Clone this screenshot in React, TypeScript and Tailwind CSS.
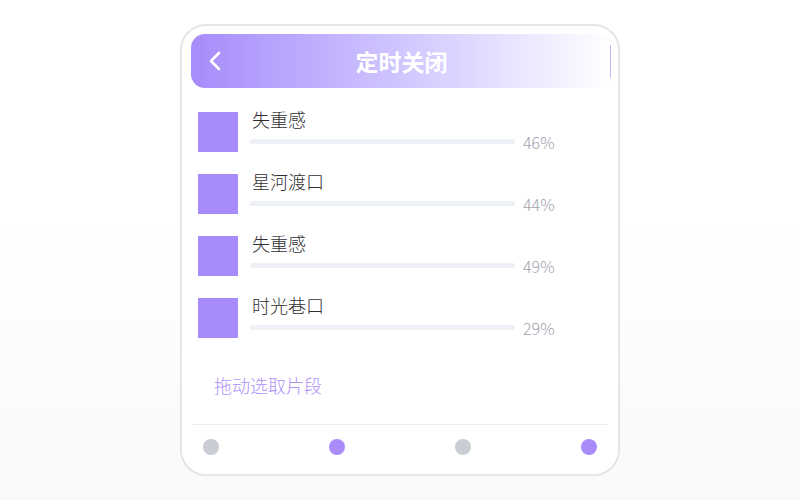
import React from "react";

interface Track {
  name: string;
  percent: number;
}

const TRACKS: Track[] = [
  { name: "失重感", percent: 46 },
  { name: "星河渡口", percent: 44 },
  { name: "失重感", percent: 49 },
  { name: "时光巷口", percent: 29 },
];

// page dots under the list: purple = active
const DOTS = [false, true, false, true];

const FONT = { fontFamily: '"Noto Sans CJK SC", "Noto Sans", sans-serif' };

const BackIcon = () => (
  <svg width="14" height="20" viewBox="0 0 14 20" fill="none">
    <path
      d="M11 2 L3 10 L11 18"
      stroke="white"
      strokeWidth="2.6"
      strokeLinecap="round"
      strokeLinejoin="round"
    />
  </svg>
);

const TrackRow: React.FC<{ track: Track }> = ({ track }) => (
  <div className="flex items-start h-10">
    <div className="w-10 h-10 bg-[#a78bfa] shrink-0" />
    <div className="ml-3 -mt-0.5 flex flex-col">
      <span className="text-[18px] leading-[18px] font-light text-[#2f2f33] pl-0.5">{track.name}</span>
      <div className="mt-[3px] h-5 flex items-center">
        <div className="w-[265px] h-[5px] rounded-full bg-[#edf0f4]" />
        <span className="ml-2 translate-y-px text-[16px] leading-5 font-light text-[#9ba1ab]">
          {track.percent}%
        </span>
      </div>
    </div>
  </div>
);

export default function App() {
  return (
    <div
      className="w-[800px] h-[500px] flex items-center justify-center bg-linear-to-b from-white from-45% to-[#f9f9fa]"
      style={FONT}
    >
      <div className="w-[440px] rounded-[26px] border-2 border-[#e6e6ea] bg-white pt-2 pb-[19px]">
        {/* --- Header --- */}
        <div className="relative ml-[9px] w-[421px] h-[54px] rounded-[14px] bg-linear-to-r from-[#a78bfa] to-white flex items-center justify-center">
          <div className="absolute left-[17px] top-[17px]">
            <BackIcon />
          </div>
          <h1 className="text-[23px] font-bold text-white">定时关闭</h1>
          <div className="absolute right-[1px] top-[11px] h-[33px] w-px bg-[#c4b5fd]" />
        </div>

        {/* --- Track list --- */}
        <div className="mt-6 pl-4 flex flex-col gap-[22px]">
          {TRACKS.map((t, i) => (
            <TrackRow key={i} track={t} />
          ))}
        </div>

        <p className="mt-[35px] pl-8 text-[18px] leading-6 font-light text-[#ad91fb]">拖动选取片段</p>

        <div className="mt-[27px] mx-[10px] h-px bg-[#eeeeef]" />

        {/* --- Dots --- */}
        <div className="mt-[14px] mx-[10px] px-[11px] flex justify-between">
          {DOTS.map((on, i) => (
            <span
              key={i}
              className={on ? "w-4 h-4 rounded-full bg-[#a98bfa]" : "w-4 h-4 rounded-full bg-[#c9cdd3]"}
            />
          ))}
        </div>
      </div>
    </div>
  );
}
